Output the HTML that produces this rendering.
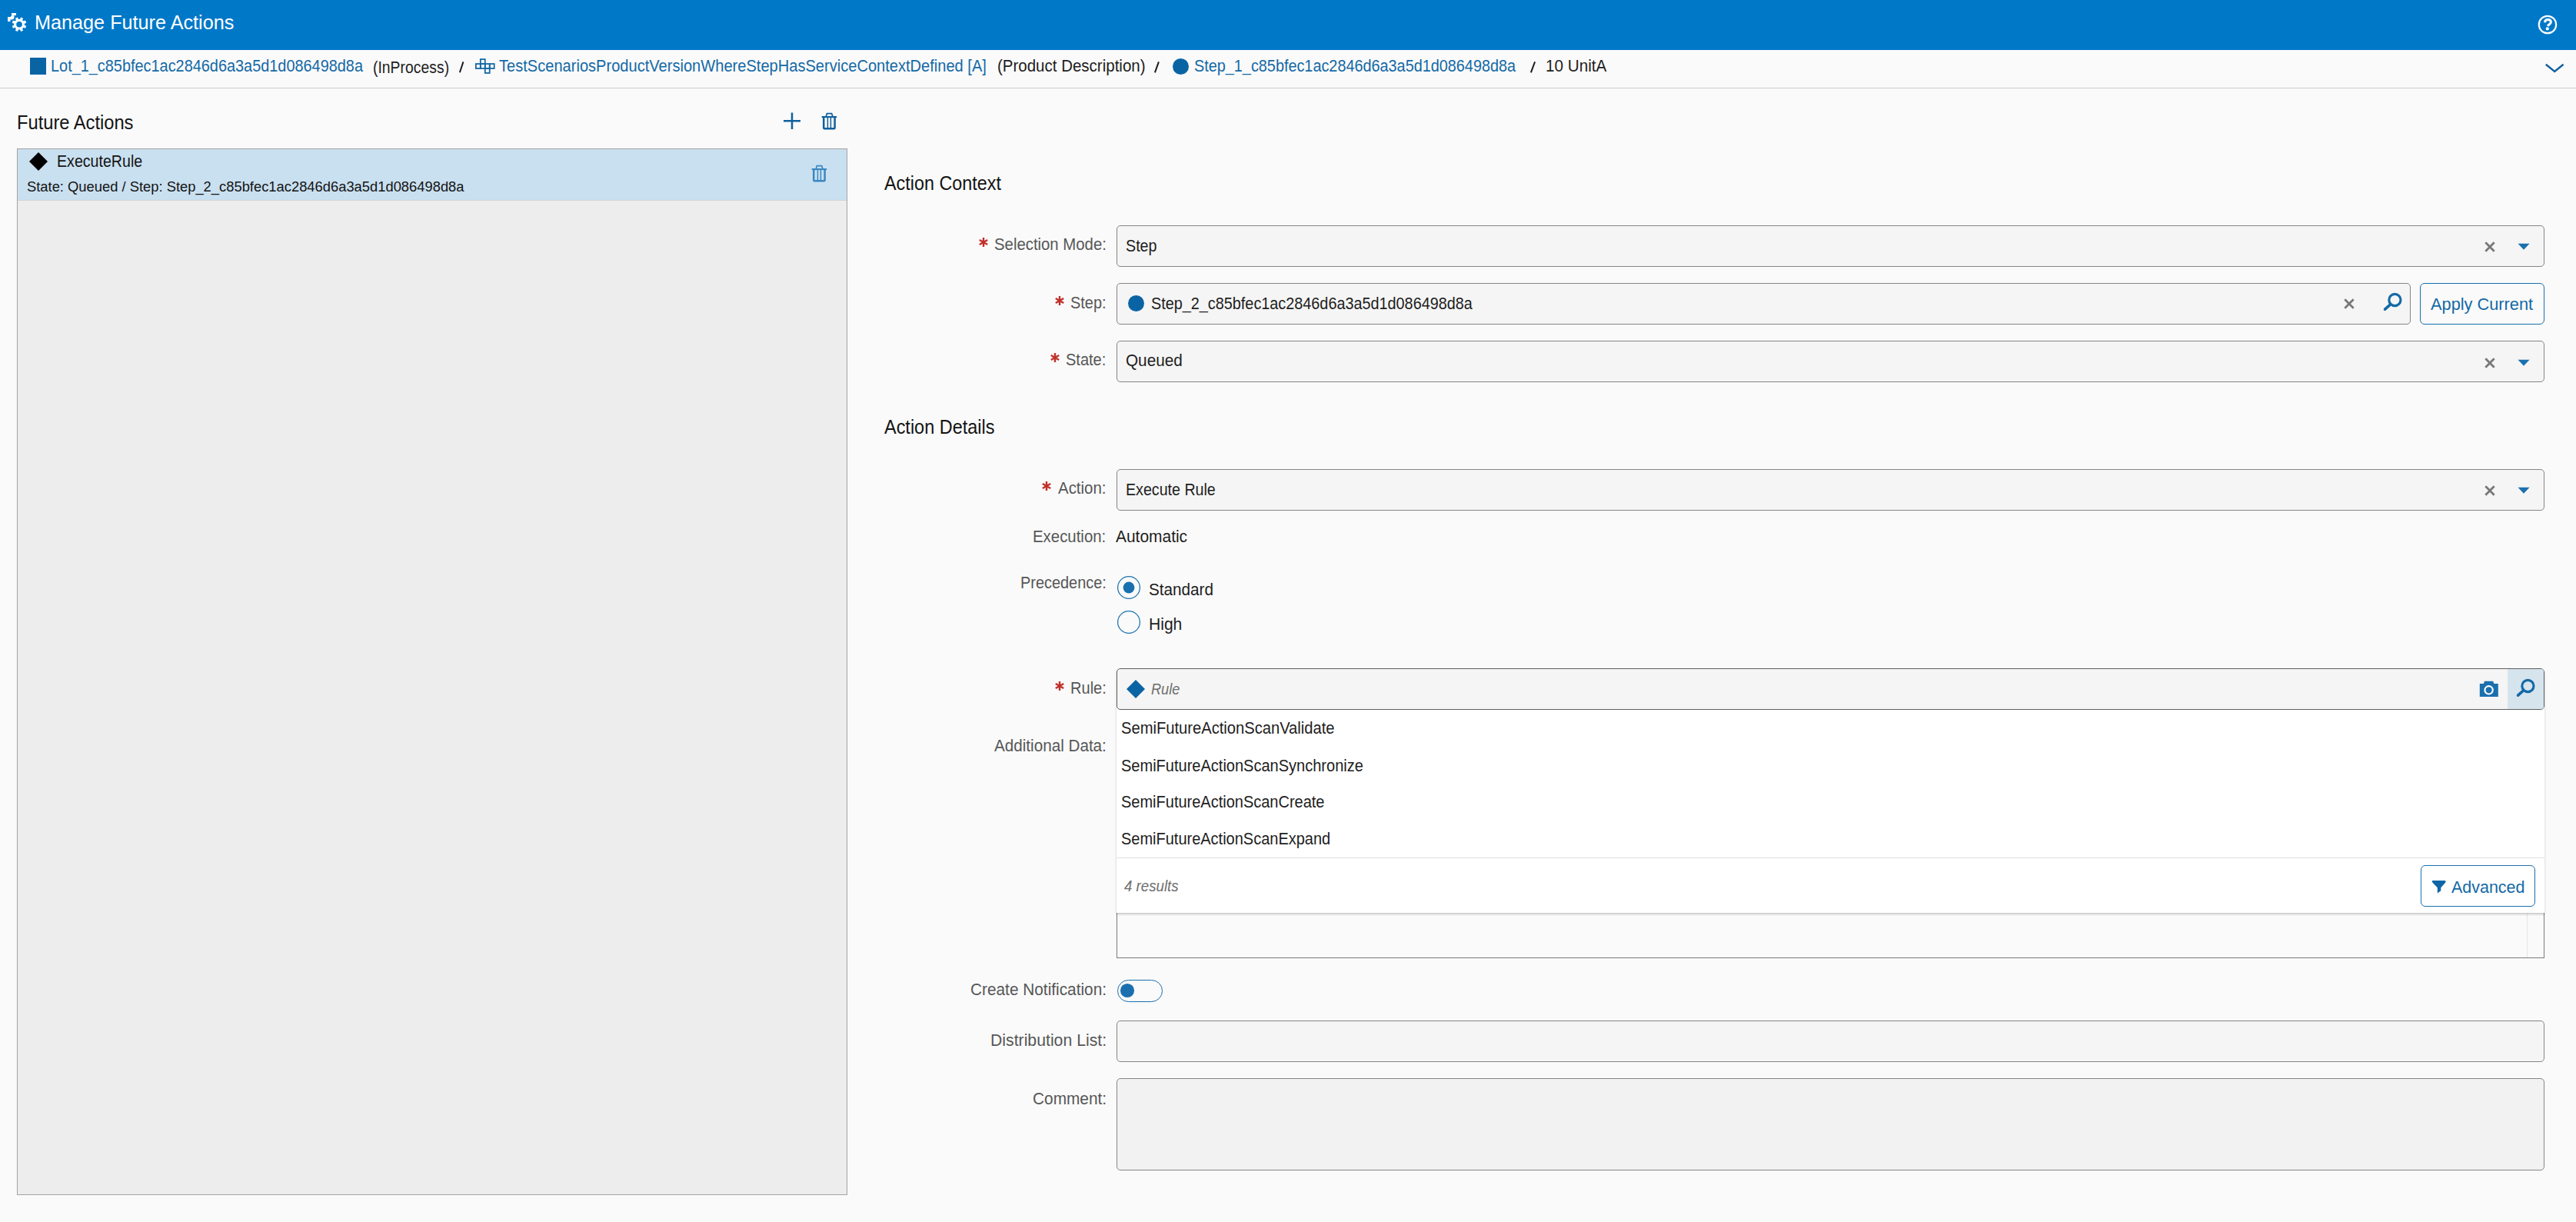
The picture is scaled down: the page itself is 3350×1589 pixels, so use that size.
<!DOCTYPE html><html><head><meta charset="utf-8"><style>html,body{margin:0;padding:0}body{width:3350px;height:1589px;overflow:hidden;position:relative;background:#fafafa;font-family:"Liberation Sans",sans-serif}</style></head><body><div style="position:absolute;left:0px;top:0px;width:3350px;height:65px;background:#0078c8"></div>
<svg style="position:absolute;left:0px;top:0px" width="50" height="50" viewBox="0 0 50 50"><path fill="#fff" fill-rule="evenodd" d="M25.00,24.80L26.03,24.88L27.04,22.42L30.12,23.70L29.10,26.15L29.88,26.82L30.55,27.60L33.00,26.58L34.28,29.66L31.82,30.67L31.90,31.70L31.82,32.73L34.28,33.74L33.00,36.82L30.55,35.80L29.88,36.58L29.10,37.25L30.12,39.70L27.04,40.98L26.03,38.52L25.00,38.60L23.97,38.52L22.96,40.98L19.88,39.70L20.90,37.25L20.12,36.58L19.45,35.80L17.00,36.82L15.72,33.74L18.18,32.73L18.10,31.70L18.18,30.67L15.72,29.66L17.00,26.58L19.45,27.60L20.12,26.82L20.90,26.15L19.88,23.70L22.96,22.42L23.97,24.88Z M28.8,31.7 A3.8,3.8 0 1 0 21.2,31.7 A3.8,3.8 0 1 0 28.8,31.7Z"/><path fill="#fff" d="M10,22 L13.5,22 L15.1,20.2 L15,17 L21,17 L21,20 L18.3,20 L18.6,23.2 L17,25.3 L13.5,25.6 L13.5,27.9 L10,27.9Z"/></svg>
<svg style="position:absolute;left:3298px;top:17px" width="30" height="30" viewBox="0 0 30 30"><circle cx="15" cy="15" r="11.2" fill="none" stroke="#fff" stroke-width="2.2"/><path d="M11.6,12.3 C11.6,9.7 13.2,8.6 15.5,8.6 C17.9,8.6 19.4,9.9 19.4,11.8 C19.4,14.2 16.6,14.6 15.1,16.8" fill="none" stroke="#fff" stroke-width="3"/><circle cx="14.8" cy="20.4" r="2.1" fill="#fff"/></svg>
<div style="position:absolute;left:0px;top:114px;width:3350px;height:1px;background:#cdcdcd"></div>
<div style="position:absolute;left:39px;top:75.3px;width:21px;height:21.3px;background:#0a64a4"></div>
<svg style="position:absolute;left:610px;top:70px" width="40" height="32" viewBox="610 70 40 32"><g fill="none" stroke="#1469a6" stroke-width="1.8"><rect x="624.85" y="77.10" width="5.95" height="5.95"/><rect x="618.90" y="83.05" width="5.95" height="5.95"/><rect x="624.85" y="83.05" width="5.95" height="5.95"/><rect x="630.80" y="83.05" width="5.95" height="5.95"/><rect x="636.75" y="83.05" width="5.95" height="5.95"/><rect x="630.80" y="89.00" width="5.95" height="5.95"/></g></svg>
<div style="position:absolute;left:1524.5px;top:75.8px;width:21.2px;height:21.2px;border-radius:50%;background:#0a64a4"></div>
<svg style="position:absolute;left:3306px;top:78px" width="32" height="22" viewBox="0 0 32 22"><path d="M4.8,5.8 L16.2,15 L27.6,5.8" fill="none" stroke="#10609e" stroke-width="2.4"/></svg>
<svg style="position:absolute;left:592.6px;top:76px" width="14.399999999999977" height="22" viewBox="0 0 14.399999999999977 22"><path d="M9.50,4.40 L4.90,18.30" stroke="#1e1e1e" stroke-width="2"/></svg>
<svg style="position:absolute;left:1497.0px;top:76px" width="14.799999999999955" height="22" viewBox="0 0 14.799999999999955 22"><path d="M9.90,4.40 L4.90,18.30" stroke="#1e1e1e" stroke-width="2"/></svg>
<svg style="position:absolute;left:1985.7px;top:76px" width="15.0" height="22" viewBox="0 0 15.0 22"><path d="M10.10,4.40 L4.90,18.30" stroke="#1e1e1e" stroke-width="2"/></svg>
<svg style="position:absolute;left:1015px;top:142px" width="30" height="30" viewBox="0 0 30 30"><path d="M15,4.6 V26 M4,15.2 H26" stroke="#10609e" stroke-width="2.5" fill="none"/></svg>
<svg style="position:absolute;left:1062px;top:140px" width="32" height="32" viewBox="0 0 32 32"><path d="M12.2,11.6 L13.4,7.7 L19.6,7.7 L20.9,11.6" fill="none" stroke="#10609e" stroke-width="1.7"/><rect x="6.7" y="11" width="19.4" height="2.1" fill="#10609e"/><path d="M9.2,12.5 L9.2,26.2 Q9.2,27.2 10.2,27.2 L22.6,27.2 Q23.6,27.2 23.6,26.2 L23.6,12.5" fill="none" stroke="#10609e" stroke-width="2.5"/><path d="M14.4,13 V26 M18.4,13 V26" stroke="#10609e" stroke-width="1.5"/></svg>
<div style="position:absolute;left:22px;top:193px;width:1080px;height:1361px;background:#ededed;border:1px solid #a3a3a3;box-sizing:border-box"></div>
<div style="position:absolute;left:23px;top:194px;width:1078px;height:67px;background:#c9e0f0;border-bottom:1px solid #d4d4d4;box-sizing:border-box"></div>
<svg style="position:absolute;left:36px;top:196px" width="28" height="28" viewBox="0 0 28 28"><path d="M14,2 L26,14 L14,26 L2,14Z" fill="#000"/></svg>
<svg style="position:absolute;left:1048.5px;top:207.9px" width="32" height="32" viewBox="0 0 32 32"><path d="M12.2,11.6 L13.4,7.7 L19.6,7.7 L20.9,11.6" fill="none" stroke="#3a88c2" stroke-width="1.7"/><rect x="6.7" y="11" width="19.4" height="2.1" fill="#3a88c2"/><path d="M9.2,12.5 L9.2,26.2 Q9.2,27.2 10.2,27.2 L22.6,27.2 Q23.6,27.2 23.6,26.2 L23.6,12.5" fill="none" stroke="#3a88c2" stroke-width="2.5"/><path d="M14.4,13 V26 M18.4,13 V26" stroke="#3a88c2" stroke-width="1.5"/></svg>
<div style="position:absolute;left:1452px;top:293px;width:1857px;height:54px;background:#f5f5f5;border:1px solid #858585;border-radius:5px;box-sizing:border-box"></div>
<div style="position:absolute;left:1452px;top:368px;width:1683px;height:54px;background:#f5f5f5;border:1px solid #858585;border-radius:5px;box-sizing:border-box"></div>
<div style="position:absolute;left:3147px;top:368px;width:162px;height:54px;border:1.5px solid #1a70ae;border-radius:6px;box-sizing:border-box;background:#fafafa"></div>
<div style="position:absolute;left:1452px;top:443px;width:1857px;height:54px;background:#f5f5f5;border:1px solid #858585;border-radius:5px;box-sizing:border-box"></div>
<div style="position:absolute;left:1452px;top:610px;width:1857px;height:54px;background:#f5f5f5;border:1px solid #858585;border-radius:5px;box-sizing:border-box"></div>
<div style="position:absolute;left:1452px;top:942px;width:1857px;height:304px;background:#fafafa;border:1px solid #7a7a7a;box-sizing:border-box"></div>
<div style="position:absolute;left:3286px;top:943px;width:1px;height:302px;background:#e6e6e6"></div>
<div style="position:absolute;left:1452px;top:869px;width:1857px;height:318px;box-shadow:0 2px 3px rgba(0,0,0,0.2);background:#fff;border-radius:5px 5px 0 0"></div>
<div style="position:absolute;left:1452px;top:869px;width:1857px;height:54px;background:#f5f5f5;border:1px solid #5e5e5e;border-radius:5px;box-sizing:border-box;overflow:hidden"></div>
<div style="position:absolute;left:3261px;top:870px;width:47px;height:52px;background:#d6e4ee;border-radius:0 4px 4px 0"></div>
<div style="position:absolute;left:1452px;top:1327px;width:1857px;height:54px;background:#f5f5f5;border:1px solid #858585;border-radius:5px;box-sizing:border-box"></div>
<div style="position:absolute;left:1452px;top:1402px;width:1857px;height:120px;background:#f2f2f2;border:1px solid #858585;border-radius:5px;box-sizing:border-box"></div>
<svg style="position:absolute;left:3227.5px;top:311.3px" width="20" height="20" viewBox="0 0 20 20"><path d="M4.3,4.3 L15.7,15.7 M15.7,4.3 L4.3,15.7" stroke="#787878" stroke-width="2.8"/></svg>
<svg style="position:absolute;left:3272px;top:315px" width="20" height="12" viewBox="0 0 20 12"><path d="M2.5,1.7 L17.6,1.7 L10,9.8Z" fill="#1a70ae"/></svg>
<svg style="position:absolute;left:3044.6px;top:385.2px" width="20" height="20" viewBox="0 0 20 20"><path d="M4.3,4.3 L15.7,15.7 M15.7,4.3 L4.3,15.7" stroke="#787878" stroke-width="2.8"/></svg>
<svg style="position:absolute;left:3227.5px;top:461.5px" width="20" height="20" viewBox="0 0 20 20"><path d="M4.3,4.3 L15.7,15.7 M15.7,4.3 L4.3,15.7" stroke="#787878" stroke-width="2.8"/></svg>
<svg style="position:absolute;left:3272px;top:465.5px" width="20" height="12" viewBox="0 0 20 12"><path d="M2.5,1.7 L17.6,1.7 L10,9.8Z" fill="#1a70ae"/></svg>
<svg style="position:absolute;left:3227.5px;top:628px" width="20" height="20" viewBox="0 0 20 20"><path d="M4.3,4.3 L15.7,15.7 M15.7,4.3 L4.3,15.7" stroke="#787878" stroke-width="2.8"/></svg>
<svg style="position:absolute;left:3272px;top:632px" width="20" height="12" viewBox="0 0 20 12"><path d="M2.5,1.7 L17.6,1.7 L10,9.8Z" fill="#1a70ae"/></svg>
<svg style="position:absolute;left:3096px;top:378px" width="30" height="30" viewBox="0 0 30 30"><circle cx="18.4" cy="12" r="7.6" fill="none" stroke="#1469a6" stroke-width="3.1"/><path d="M12.9,17.6 L5.6,24.2" stroke="#1469a6" stroke-width="3.6" stroke-linecap="round"/></svg>
<div style="position:absolute;left:1466.6px;top:384.3px;width:21px;height:21px;border-radius:50%;background:#0a64a4"></div>
<svg style="position:absolute;left:3269.2px;top:879.8px" width="30" height="30" viewBox="0 0 30 30"><circle cx="18.4" cy="12" r="7.6" fill="none" stroke="#1469a6" stroke-width="3.1"/><path d="M12.9,17.6 L5.6,24.2" stroke="#1469a6" stroke-width="3.6" stroke-linecap="round"/></svg>
<svg style="position:absolute;left:1450px;top:746px" width="36" height="36" viewBox="0 0 36 36"><circle cx="18" cy="18" r="14.4" fill="#fafafa" stroke="#1f74b0" stroke-width="1.25"/><circle cx="18" cy="18" r="7.4" fill="#1a70ae"/></svg>
<svg style="position:absolute;left:1450px;top:791px" width="36" height="36" viewBox="0 0 36 36"><circle cx="18" cy="18" r="14.4" fill="#fafafa" stroke="#1f74b0" stroke-width="1.25"/></svg>
<svg style="position:absolute;left:1463px;top:882px" width="28" height="28" viewBox="0 0 28 28"><path d="M14,2 L26,14 L14,26 L2,14Z" fill="#0a64a4"/></svg>
<svg style="position:absolute;left:3222px;top:882px" width="30" height="28" viewBox="0 0 30 28"><path d="M2.8,6.9 L7.9,6.9 L9,3.7 L20.2,3.7 L21.3,6.9 L26.8,6.9 L26.8,24 L2.8,24Z" fill="#1a70ae"/><circle cx="14.6" cy="15.3" r="5.2" fill="none" stroke="#fff" stroke-width="2.1"/></svg>
<div style="position:absolute;left:1452px;top:1115px;width:1857px;height:1px;background:#e0e0e0"></div>
<div style="position:absolute;left:3148px;top:1125px;width:148.6px;height:54px;border:1.5px solid #1a70ae;border-radius:6px;box-sizing:border-box;background:#fff"></div>
<svg style="position:absolute;left:3160px;top:1142px" width="24" height="22" viewBox="0 0 24 22"><path d="M3.1,3 L20.3,3 L20.3,5.6 L14.3,12.3 L14.3,16.2 L9.8,19.5 L9.8,12.3 L3.1,5.3Z" fill="#0f66a6"/></svg>
<div style="position:absolute;left:1452.5px;top:1273.5px;width:59px;height:29px;border:1.5px solid #1a70ae;border-radius:15px;box-sizing:border-box;background:#fafafa"></div>
<div style="position:absolute;left:1457px;top:1279.2px;width:17.7px;height:17.7px;border-radius:50%;background:#1a70ae"></div>
<svg style="position:absolute;left:1268.6px;top:305.2px" width="20" height="20" viewBox="1268.6 305.2 20 20"><path d="M1278.60,309.20 L1278.60,321.20 M1283.80,312.20 L1273.40,318.20 M1283.80,318.20 L1273.40,312.20 " stroke="#c0302a" stroke-width="2.4"/></svg>
<svg style="position:absolute;left:1367.5px;top:380.5px" width="20" height="20" viewBox="1367.5 380.5 20 20"><path d="M1377.50,384.50 L1377.50,396.50 M1382.70,387.50 L1372.30,393.50 M1382.70,393.50 L1372.30,387.50 " stroke="#c0302a" stroke-width="2.4"/></svg>
<svg style="position:absolute;left:1361.6px;top:454.6px" width="20" height="20" viewBox="1361.6 454.6 20 20"><path d="M1371.60,458.60 L1371.60,470.60 M1376.80,461.60 L1366.40,467.60 M1376.80,467.60 L1366.40,461.60 " stroke="#c0302a" stroke-width="2.4"/></svg>
<svg style="position:absolute;left:1350.9px;top:622.2px" width="20" height="20" viewBox="1350.9 622.2 20 20"><path d="M1360.90,626.20 L1360.90,638.20 M1366.10,629.20 L1355.70,635.20 M1366.10,635.20 L1355.70,629.20 " stroke="#c0302a" stroke-width="2.4"/></svg>
<svg style="position:absolute;left:1368.2px;top:882.0px" width="20" height="20" viewBox="1368.2 882.0 20 20"><path d="M1378.20,886.00 L1378.20,898.00 M1383.40,889.00 L1373.00,895.00 M1383.40,895.00 L1373.00,889.00 " stroke="#c0302a" stroke-width="2.4"/></svg>
<div style="position:absolute;left:44.58px;top:17.00px;font-size:25px;line-height:1;white-space:nowrap;color:#ffffff;transform:scaleX(1.0087);transform-origin:0 0;">Manage Future Actions</div>
<div style="position:absolute;left:66.45px;top:76.00px;font-size:21.5px;line-height:1;white-space:nowrap;color:#1469a6;transform:scaleX(0.9252);transform-origin:0 0;">Lot_1_c85bfec1ac2846d6a3a5d1d086498d8a</div>
<div style="position:absolute;left:485.32px;top:77.00px;font-size:22px;line-height:1;white-space:nowrap;color:#1e1e1e;transform:scaleX(0.8811);transform-origin:0 0;">(InProcess)</div>
<div style="position:absolute;left:649.20px;top:76.00px;font-size:21.5px;line-height:1;white-space:nowrap;color:#1469a6;transform:scaleX(0.9339);transform-origin:0 0;">TestScenariosProductVersionWhereStepHasServiceContextDefined [A]</div>
<div style="position:absolute;left:1296.67px;top:75.00px;font-size:22px;line-height:1;white-space:nowrap;color:#1e1e1e;transform:scaleX(0.9317);transform-origin:0 0;">(Product Description)</div>
<div style="position:absolute;left:1552.88px;top:76.00px;font-size:21.5px;line-height:1;white-space:nowrap;color:#1469a6;transform:scaleX(0.9226);transform-origin:0 0;">Step_1_c85bfec1ac2846d6a3a5d1d086498d8a</div>
<div style="position:absolute;left:2009.66px;top:75.00px;font-size:22px;line-height:1;white-space:nowrap;color:#1e1e1e;transform:scaleX(0.9410);transform-origin:0 0;">10 UnitA</div>
<div style="position:absolute;left:22.10px;top:147.00px;font-size:25px;line-height:1;white-space:nowrap;color:#141414;transform:scaleX(0.9478);transform-origin:0 0;">Future Actions</div>
<div style="position:absolute;left:74.02px;top:199.00px;font-size:22px;line-height:1;white-space:nowrap;color:#141414;transform:scaleX(0.8910);transform-origin:0 0;">ExecuteRule</div>
<div style="position:absolute;left:34.64px;top:233.00px;font-size:19.2px;line-height:1;white-space:nowrap;color:#141414;transform:scaleX(0.9567);transform-origin:0 0;">State: Queued / Step: Step_2_c85bfec1ac2846d6a3a5d1d086498d8a</div>
<div style="position:absolute;left:1150.40px;top:226.00px;font-size:25px;line-height:1;white-space:nowrap;color:#141414;transform:scaleX(0.9350);transform-origin:0 0;">Action Context</div>
<div style="position:absolute;left:1292.78px;top:307.00px;font-size:22px;line-height:1;white-space:nowrap;color:#575757;transform:scaleX(0.9245);transform-origin:0 0;">Selection Mode:</div>
<div style="position:absolute;left:1464.10px;top:309.00px;font-size:22px;line-height:1;white-space:nowrap;color:#1e1e1e;transform:scaleX(0.8955);transform-origin:0 0;">Step</div>
<div style="position:absolute;left:1391.69px;top:383.00px;font-size:22px;line-height:1;white-space:nowrap;color:#575757;transform:scaleX(0.9061);transform-origin:0 0;">Step:</div>
<div style="position:absolute;left:1496.88px;top:385.00px;font-size:21.5px;line-height:1;white-space:nowrap;color:#1e1e1e;transform:scaleX(0.9221);transform-origin:0 0;">Step_2_c85bfec1ac2846d6a3a5d1d086498d8a</div>
<div style="position:absolute;left:3161.00px;top:385.00px;font-size:22px;line-height:1;white-space:nowrap;color:#1469a6;transform:scaleX(0.9896);transform-origin:0 0;">Apply Current</div>
<div style="position:absolute;left:1386.09px;top:457.00px;font-size:22px;line-height:1;white-space:nowrap;color:#575757;transform:scaleX(0.9091);transform-origin:0 0;">State:</div>
<div style="position:absolute;left:1464.06px;top:458.00px;font-size:22px;line-height:1;white-space:nowrap;color:#1e1e1e;transform:scaleX(0.9421);transform-origin:0 0;">Queued</div>
<div style="position:absolute;left:1150.20px;top:543.00px;font-size:25px;line-height:1;white-space:nowrap;color:#141414;transform:scaleX(0.9382);transform-origin:0 0;">Action Details</div>
<div style="position:absolute;left:1375.70px;top:624.00px;font-size:22px;line-height:1;white-space:nowrap;color:#575757;transform:scaleX(0.9288);transform-origin:0 0;">Action:</div>
<div style="position:absolute;left:1463.52px;top:626.00px;font-size:22px;line-height:1;white-space:nowrap;color:#1e1e1e;transform:scaleX(0.8922);transform-origin:0 0;">Execute Rule</div>
<div style="position:absolute;left:1343.35px;top:687.00px;font-size:22px;line-height:1;white-space:nowrap;color:#575757;transform:scaleX(0.9273);transform-origin:0 0;">Execution:</div>
<div style="position:absolute;left:1450.70px;top:687.00px;font-size:22px;line-height:1;white-space:nowrap;color:#1e1e1e;transform:scaleX(0.9515);transform-origin:0 0;">Automatic</div>
<div style="position:absolute;left:1326.59px;top:747.00px;font-size:22px;line-height:1;white-space:nowrap;color:#575757;transform:scaleX(0.9050);transform-origin:0 0;">Precedence:</div>
<div style="position:absolute;left:1494.06px;top:756.00px;font-size:22px;line-height:1;white-space:nowrap;color:#1e1e1e;transform:scaleX(0.9402);transform-origin:0 0;">Standard</div>
<div style="position:absolute;left:1494.39px;top:801.00px;font-size:22px;line-height:1;white-space:nowrap;color:#1e1e1e;transform:scaleX(0.9571);transform-origin:0 0;">High</div>
<div style="position:absolute;left:1391.97px;top:884.00px;font-size:22px;line-height:1;white-space:nowrap;color:#575757;transform:scaleX(0.9125);transform-origin:0 0;">Rule:</div>
<div style="position:absolute;left:1496.84px;top:885.00px;font-size:21px;line-height:1;white-space:nowrap;color:#6e6e6e;transform:scaleX(0.8643);transform-origin:0 0;font-style:italic;">Rule</div>
<div style="position:absolute;left:1293.00px;top:959.00px;font-size:22px;line-height:1;white-space:nowrap;color:#575757;transform:scaleX(0.9390);transform-origin:0 0;">Additional Data:</div>
<div style="position:absolute;left:1458.08px;top:936.00px;font-size:22px;line-height:1;white-space:nowrap;color:#1e1e1e;transform:scaleX(0.9163);transform-origin:0 0;">SemiFutureActionScanValidate</div>
<div style="position:absolute;left:1458.09px;top:985.00px;font-size:22px;line-height:1;white-space:nowrap;color:#1e1e1e;transform:scaleX(0.9099);transform-origin:0 0;">SemiFutureActionScanSynchronize</div>
<div style="position:absolute;left:1458.09px;top:1032.00px;font-size:22px;line-height:1;white-space:nowrap;color:#1e1e1e;transform:scaleX(0.9087);transform-origin:0 0;">SemiFutureActionScanCreate</div>
<div style="position:absolute;left:1458.09px;top:1080.00px;font-size:22px;line-height:1;white-space:nowrap;color:#1e1e1e;transform:scaleX(0.9084);transform-origin:0 0;">SemiFutureActionScanExpand</div>
<div style="position:absolute;left:1462.00px;top:1142.00px;font-size:20px;line-height:1;white-space:nowrap;color:#6e6e6e;transform:scaleX(0.9333);transform-origin:0 0;font-style:italic;">4 results</div>
<div style="position:absolute;left:3187.60px;top:1143.00px;font-size:22px;line-height:1;white-space:nowrap;color:#1469a6;transform:scaleX(0.9753);transform-origin:0 0;">Advanced</div>
<div style="position:absolute;left:1262.35px;top:1276.00px;font-size:22px;line-height:1;white-space:nowrap;color:#575757;transform:scaleX(0.9462);transform-origin:0 0;">Create Notification:</div>
<div style="position:absolute;left:1287.77px;top:1342.00px;font-size:22px;line-height:1;white-space:nowrap;color:#575757;transform:scaleX(0.9654);transform-origin:0 0;">Distribution List:</div>
<div style="position:absolute;left:1342.65px;top:1418.00px;font-size:22px;line-height:1;white-space:nowrap;color:#575757;transform:scaleX(0.9475);transform-origin:0 0;">Comment:</div></body></html>
